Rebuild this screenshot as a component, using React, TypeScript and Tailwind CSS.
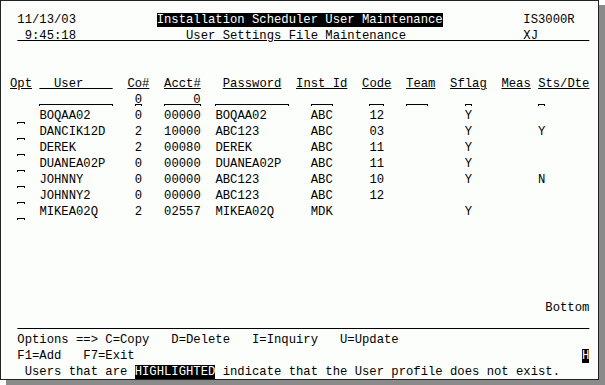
import React from 'react'

type Seg = [number, string, ('u' | 'r' | 'f' | 'o')?]

const users = [
  ['BOQAA02', '0', '00000', 'BOQAA02', 'ABC', '12', 'Y', ''],
  ['DANCIK12D', '2', '10000', 'ABC123', 'ABC', '03', 'Y', 'Y'],
  ['DEREK', '2', '00080', 'DEREK', 'ABC', '11', 'Y', ''],
  ['DUANEA02P', '0', '00000', 'DUANEA02P', 'ABC', '11', 'Y', ''],
  ['JOHNNY', '0', '00000', 'ABC123', 'ABC', '10', 'Y', 'N'],
  ['JOHNNY2', '0', '00000', 'ABC123', 'ABC', '12', '', ''],
  ['MIKEA02Q', '2', '02557', 'MIKEA02Q', 'MDK', '', 'Y', ''],
]

function Field({ text, low }: { text: string; low?: boolean }) {
  return (
    <span className="relative inline-block h-4 align-top">
      {text}
      <span
        className={
          low
            ? 'absolute left-0 right-0 top-[14px] h-[2px] border-t border-x border-black'
            : 'absolute left-0 right-0 top-[12px] h-[2px] border-t border-x border-black'
        }
      />
    </span>
  )
}

function Line({ segs }: { segs: Seg[] }) {
  let cursor = 0
  const out: React.ReactNode[] = []
  segs.forEach(([col, text, kind], i) => {
    if (col > cursor) out.push(' '.repeat(col - cursor))
    if (kind === 'u') {
      out.push(
        <span key={i} className="underline decoration-1 underline-offset-[1px]">
          {text}
        </span>
      )
    } else if (kind === 'r') {
      out.push(
        <span key={i} className="bg-black text-white">
          {text}
        </span>
      )
    } else if (kind === 'f' || kind === 'o') {
      out.push(<Field key={i} text={text} low={kind === 'o'} />)
    } else {
      out.push(text)
    }
    cursor = col + text.length
  })
  return <div className="h-4 leading-4 whitespace-pre">{out}</div>
}

export default function App() {
  const subtitle =
    ' 9:45:18' +
    ' '.repeat(15) +
    'User Settings File Maintenance' +
    ' '.repeat(16) +
    'XJ' +
    ' '.repeat(7)

  const rows: Seg[][] = [
    [[2, '11/13/03'], [21, 'Installation Scheduler User Maintenance', 'r'], [71, 'IS3000R']],
    [[2, subtitle, 'u']],
    [],
    [],
    [
      [1, 'Opt', 'u'],
      [5, '  User    ', 'u'],
      [17, 'Co#', 'u'],
      [22, 'Acct#', 'u'],
      [30, 'Password', 'u'],
      [40, 'Inst Id', 'u'],
      [49, 'Code', 'u'],
      [55, 'Team', 'u'],
      [61, 'Sflag', 'u'],
      [68, 'Meas', 'u'],
      [73, 'Sts/Dte', 'u'],
    ],
    [
      [5, ' '.repeat(10), 'f'],
      [18, '0', 'f'],
      [22, '    0', 'f'],
      [29, ' '.repeat(10), 'f'],
      [42, '   ', 'f'],
      [50, '  ', 'f'],
      [55, '   ', 'f'],
      [63, ' ', 'f'],
      [73, ' ', 'f'],
    ],
    ...users.map(
      (u): Seg[] => [
        [2, ' ', 'o'],
        [5, u[0]],
        [18, u[1]],
        [22, u[2]],
        [29, u[3]],
        [42, u[4]],
        [50, u[5]],
        [63, u[6]],
        [73, u[7]],
      ]
    ),
    [],
    [],
    [],
    [],
    [],
    [[74, 'Bottom']],
    [[2, ' '.repeat(78), 'u']],
    [[2, 'Options ==> C=Copy   D=Delete   I=Inquiry   U=Update']],
    [[2, 'F1=Add   F7=Exit'], [79, 'H', 'r']],
    [
      [3, 'Users that are '],
      [18, 'HIGHLIGHTED', 'r'],
      [29, ' indicate that the User profile does not exist.'],
    ],
  ]

  return (
    <div className="w-[605px] h-[385px] bg-white">
      <div className="w-[599px] h-[380px] border border-[#222] bg-[#fbfefb] pl-[1.7px] pt-[11px] overflow-hidden shadow-[6px_5px_0_#8a8a8a] font-['Liberation_Mono',monospace] text-[12.23px] text-black">
        {rows.map((segs, i) => (
          <Line key={i} segs={segs} />
        ))}
      </div>
    </div>
  )
}
